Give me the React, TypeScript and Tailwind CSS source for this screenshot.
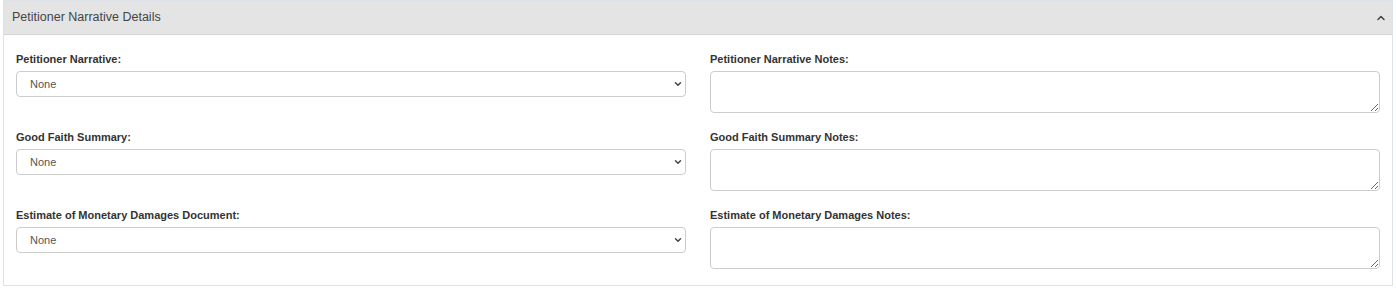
import { ChevronDown, ChevronUp } from "lucide-react";

const rows = [
  { left: "Petitioner Narrative:", right: "Petitioner Narrative Notes:" },
  { left: "Good Faith Summary:", right: "Good Faith Summary Notes:" },
  { left: "Estimate of Monetary Damages Document:", right: "Estimate of Monetary Damages Notes:" },
];

export default function App() {
  return (
    <div className="min-h-[289px] bg-white px-[3px] font-['Liberation_Sans',Arial,sans-serif] text-[#333]">
      <div className="border border-[#dde2e8] bg-white">
        {/* Panel header */}
        <div className="flex h-[34px] items-center justify-between border-b border-[#d4d4d4] bg-[#e4e4e4] pl-[8px] pr-[5px]">
          <span className="text-[12.5px] text-[#444]">Petitioner Narrative Details</span>
          <ChevronUp className="h-[12px] w-[12px] text-[#444]" strokeWidth={3} />
        </div>

        {/* Panel body */}
        <div className="grid grid-cols-2 gap-x-[24px] gap-y-[17px] px-[12px] pb-[16px] pt-[17px]">
          {rows.map((row) => (
            <div key={row.left} className="contents">
              <div>
                <label className="mb-[5px] block text-[11px] font-bold leading-[14px]">{row.left}</label>
                <div className="relative">
                  <select className="h-[26px] w-full appearance-none rounded-[4px] border border-[#ccc] bg-white pl-[13px] text-[11px] text-[#555] outline-none">
                    <option>None</option>
                  </select>
                  <ChevronDown
                    className="pointer-events-none absolute right-[3px] top-[8px] h-[10px] w-[10px] text-[#444]"
                    strokeWidth={3.5}
                  />
                </div>
              </div>
              <div>
                <label className="mb-[5px] block text-[11px] font-bold leading-[14px]">{row.right}</label>
                <textarea className="block h-[42px] w-full rounded-[4px] border border-[#ccc] bg-white text-[12px] outline-none" />
              </div>
            </div>
          ))}
        </div>
      </div>
    </div>
  );
}
